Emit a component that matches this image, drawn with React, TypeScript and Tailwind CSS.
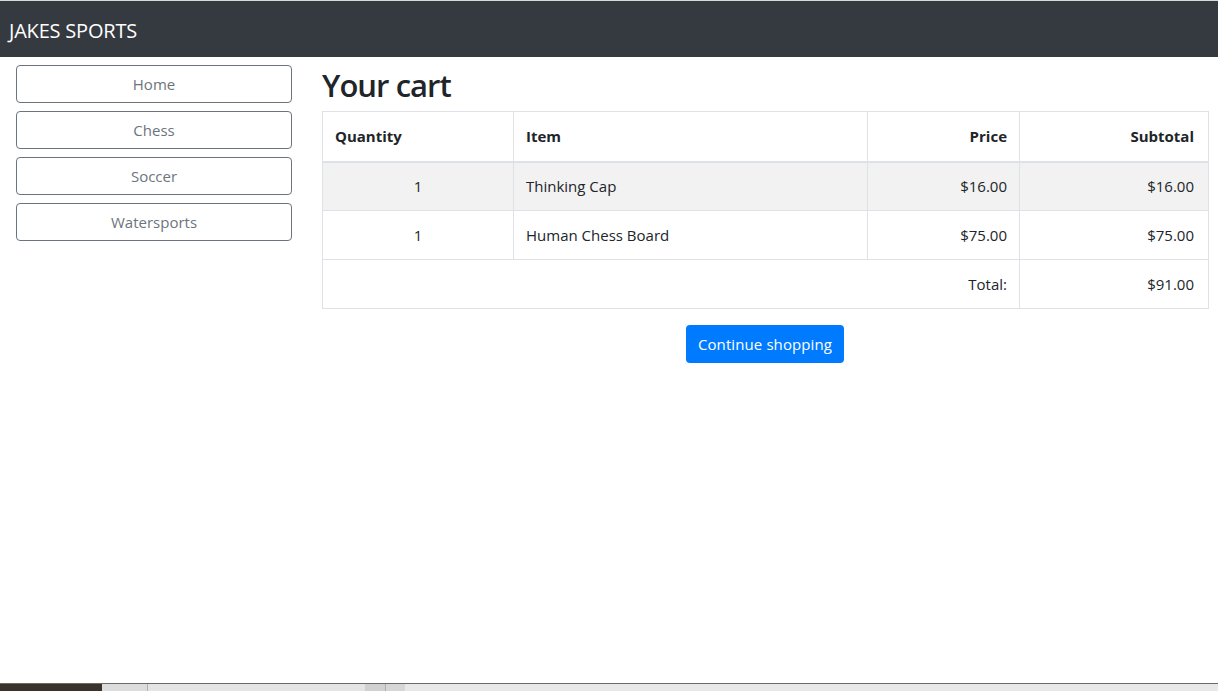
const categories = ['Home', 'Chess', 'Soccer', 'Watersports']

const lines = [
  { qty: 1, name: 'Thinking Cap', price: 16, striped: true },
  { qty: 1, name: 'Human Chess Board', price: 75, striped: false },
]

const money = (n: number) => `$${n.toFixed(2)}`

export default function App() {
  const total = lines.reduce((sum, l) => sum + l.qty * l.price, 0)

  return (
    <div
      className="flex h-[691px] w-[1218px] flex-col overflow-hidden bg-white text-[#212529]"
      style={{ fontFamily: '"Open Sans", "Noto Sans", sans-serif' }}
    >
      {/* navbar */}
      <div className="flex h-[57px] shrink-0 items-center border-t border-[#d9d9d9] bg-[#343a40] pl-[9px] pt-[3px]">
        <span className="text-[20px] tracking-[-0.2px] text-white">JAKES SPORTS</span>
      </div>

      <div className="flex flex-1 pt-2">
        {/* categories */}
        <div className="flex w-[292px] shrink-0 flex-col gap-2 pl-4">
          {categories.map((c) => (
            <button
              key={c}
              className="h-[38px] w-[276px] rounded border border-[#6c757d] text-[15px] text-[#6c757d]"
            >
              {c}
            </button>
          ))}
        </div>

        {/* cart */}
        <div className="ml-[30px] flex w-[886px] flex-col">
          <h2 className="mb-2 h-[38px] pt-[1px] text-[31px] leading-[38px] font-semibold tracking-[-0.95px]">Your cart</h2>
          <table className="w-[886px] table-fixed border-collapse text-[15px]">
            <colgroup>
              <col className="w-[191px]" />
              <col className="w-[354px]" />
              <col className="w-[152px]" />
              <col className="w-[189px]" />
            </colgroup>
            <thead>
              <tr className="h-[50px]">
                <th className="border border-b-2 border-[#dee2e6] px-3 text-left font-bold">Quantity</th>
                <th className="border border-b-2 border-[#dee2e6] px-3 text-left font-bold">Item</th>
                <th className="border border-b-2 border-[#dee2e6] px-3 text-right font-bold">Price</th>
                <th className="border border-b-2 border-[#dee2e6] pl-3 pr-[14px] text-right font-bold">Subtotal</th>
              </tr>
            </thead>
            <tbody>
              {lines.map((l) => (
                <tr key={l.name} className={l.striped ? 'h-[49px] bg-[#f2f2f2]' : 'h-[49px]'}>
                  <td className="border border-[#dee2e6] px-3 text-center">{l.qty}</td>
                  <td className="border border-[#dee2e6] px-3 text-left">{l.name}</td>
                  <td className="border border-[#dee2e6] px-3 text-right">{money(l.price)}</td>
                  <td className="border border-[#dee2e6] pl-3 pr-[14px] text-right">{money(l.qty * l.price)}</td>
                </tr>
              ))}
            </tbody>
            <tfoot>
              <tr className="h-[49px]">
                <td colSpan={3} className="border border-[#dee2e6] px-3 text-right">Total:</td>
                <td className="border border-[#dee2e6] pl-3 pr-[14px] text-right">{money(total)}</td>
              </tr>
            </tfoot>
          </table>
          <div className="mt-4 flex justify-center">
            <button className="h-[38px] rounded bg-[#007bff] px-3 text-[15px] tracking-[0.1px] text-white">
              Continue shopping
            </button>
          </div>
        </div>
      </div>

      {/* bit of desktop taskbar caught at the bottom */}
      <div className="flex h-[8px] shrink-0 border-t border-[#6a6a6a]">
        <div className="w-[102px] bg-[#3a322c]" />
        <div className="w-[45px] bg-[#dcdcdc]" />
        <div className="w-[218px] border-l border-[#b0b0b0] bg-[#e4e4e4]" />
        <div className="w-[20px] bg-[#d0d0d0]" />
        <div className="w-[20px] border-l border-[#b0b0b0] bg-[#d6d6d6]" />
        <div className="flex-1 bg-[#e8e8e8]" />
      </div>
    </div>
  )
}
